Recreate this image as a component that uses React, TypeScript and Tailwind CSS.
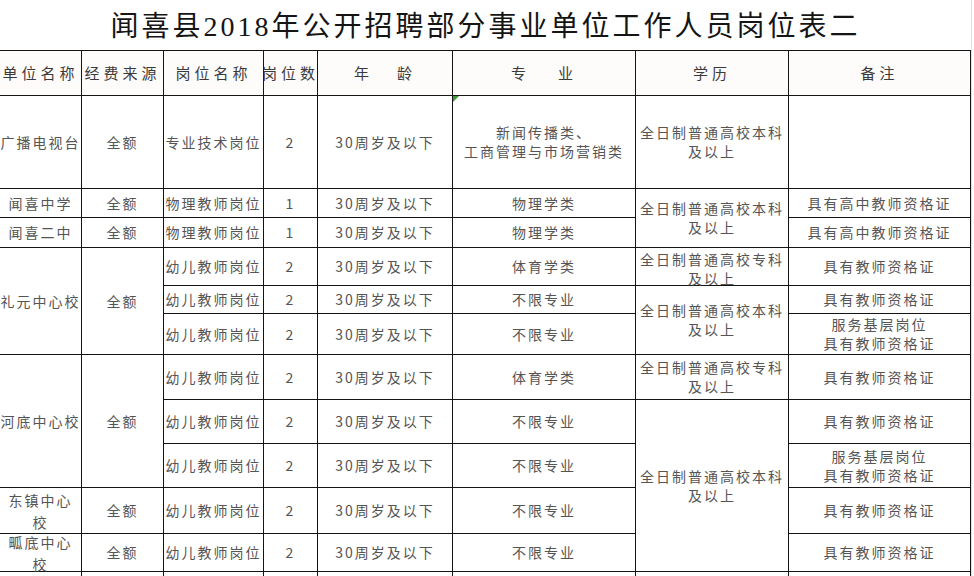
import React from "react";

const body = "font-['Noto_Sans_CJK_SC',sans-serif]";

// one grid cell, borders on the right and bottom like an Excel sheet
function Cell({
  children,
  className = "",
}: {
  children?: React.ReactNode;
  className?: string;
}) {
  return (
    <div
      className={
        "flex items-center justify-center text-center whitespace-nowrap border-r border-b border-[#141414] text-[14px] leading-[19px] tracking-[2px] text-[#555] " +
        className
      }
    >
      {children}
    </div>
  );
}

function Head({
  children,
  className = "",
}: {
  children?: React.ReactNode;
  className?: string;
}) {
  return (
    <div
      className={
        "flex items-center justify-center whitespace-nowrap border-r border-b border-[#141414] bg-[#fefbfb] text-[15px] tracking-[4px] text-[#3a3a3a] " +
        className
      }
    >
      {children}
    </div>
  );
}

const age = "30周岁及以下";

export default function App() {
  return (
    <div className={"w-[974px] h-[576px] overflow-hidden bg-white " + body}>
      <div className="w-[972px] border-r border-[#e2e2e2]">
        {/* 标题 */}
        <div className="h-[50px] w-[971px] flex items-center justify-center pt-[4px]">
          <h1 className="font-['Liberation_Serif','Noto_Sans_CJK_SC',serif] text-[28px] leading-none tracking-[3px] text-[#151515]">
            闻喜县2018年公开招聘部分事业单位工作人员岗位表二
          </h1>
        </div>

        {/* 岗位表 */}
        <div className="grid w-[971px] border-t border-[#141414] grid-cols-[82px_82px_100px_54px_135px_183px_153px_182px] grid-rows-[45px_93px_29px_30px_38px_28px_41px_45px_44px_44px_46px_38px_40px]">
          <Head>单位名称</Head>
          <Head>经费来源</Head>
          <Head>岗位名称</Head>
          <Head className="tracking-[2px]">岗位数</Head>
          <Head className="gap-6">
            <span>年</span>
            <span>龄</span>
          </Head>
          <Head className="gap-7">
            <span>专</span>
            <span>业</span>
          </Head>
          <Head>学历</Head>
          <Head>备注</Head>

          {/* 广播电视台 */}
          <Cell>广播电视台</Cell>
          <Cell>全额</Cell>
          <Cell>专业技术岗位</Cell>
          <Cell>2</Cell>
          <Cell>{age}</Cell>
          <Cell className="relative">
            <span className="absolute left-0 top-0 h-0 w-0 border-t-[6px] border-r-[6px] border-t-[#3f9a3a] border-r-transparent" />
            新闻传播类、
            <br />
            工商管理与市场营销类
          </Cell>
          <Cell>
            全日制普通高校本科
            <br />
            及以上
          </Cell>
          <Cell />

          {/* 闻喜中学 / 闻喜二中 */}
          <Cell>闻喜中学</Cell>
          <Cell>全额</Cell>
          <Cell>物理教师岗位</Cell>
          <Cell>1</Cell>
          <Cell>{age}</Cell>
          <Cell>物理学类</Cell>
          <Cell className="row-span-2">
            全日制普通高校本科
            <br />
            及以上
          </Cell>
          <Cell>具有高中教师资格证</Cell>

          <Cell>闻喜二中</Cell>
          <Cell>全额</Cell>
          <Cell>物理教师岗位</Cell>
          <Cell>1</Cell>
          <Cell>{age}</Cell>
          <Cell>物理学类</Cell>
          <Cell>具有高中教师资格证</Cell>

          {/* 礼元中心校 */}
          <Cell className="row-span-3">礼元中心校</Cell>
          <Cell className="row-span-3">全额</Cell>
          <Cell>幼儿教师岗位</Cell>
          <Cell>2</Cell>
          <Cell>{age}</Cell>
          <Cell>体育学类</Cell>
          <Cell className="pt-[4px]">
            全日制普通高校专科
            <br />
            及以上
          </Cell>
          <Cell>具有教师资格证</Cell>

          <Cell>幼儿教师岗位</Cell>
          <Cell>2</Cell>
          <Cell>{age}</Cell>
          <Cell>不限专业</Cell>
          <Cell className="row-span-2">
            全日制普通高校本科
            <br />
            及以上
          </Cell>
          <Cell>具有教师资格证</Cell>

          <Cell>幼儿教师岗位</Cell>
          <Cell>2</Cell>
          <Cell>{age}</Cell>
          <Cell>不限专业</Cell>
          <Cell>
            服务基层岗位
            <br />
            具有教师资格证
          </Cell>

          {/* 河底中心校 */}
          <Cell className="row-span-3">河底中心校</Cell>
          <Cell className="row-span-3">全额</Cell>
          <Cell>幼儿教师岗位</Cell>
          <Cell>2</Cell>
          <Cell>{age}</Cell>
          <Cell>体育学类</Cell>
          <Cell>
            全日制普通高校专科
            <br />
            及以上
          </Cell>
          <Cell>具有教师资格证</Cell>

          <Cell>幼儿教师岗位</Cell>
          <Cell>2</Cell>
          <Cell>{age}</Cell>
          <Cell>不限专业</Cell>
          <Cell className="row-span-4">
            全日制普通高校本科
            <br />
            及以上
          </Cell>
          <Cell>具有教师资格证</Cell>

          <Cell>幼儿教师岗位</Cell>
          <Cell>2</Cell>
          <Cell>{age}</Cell>
          <Cell>不限专业</Cell>
          <Cell>
            服务基层岗位
            <br />
            具有教师资格证
          </Cell>

          {/* 东镇中心校 */}
          <Cell className="leading-[22px]">
            东镇中心
            <br />
            校
          </Cell>
          <Cell>全额</Cell>
          <Cell>幼儿教师岗位</Cell>
          <Cell>2</Cell>
          <Cell>{age}</Cell>
          <Cell>不限专业</Cell>
          <Cell>具有教师资格证</Cell>

          {/* 畖底中心校 */}
          <Cell className="leading-[22px]">
            畖底中心
            <br />
            校
          </Cell>
          <Cell>全额</Cell>
          <Cell>幼儿教师岗位</Cell>
          <Cell>2</Cell>
          <Cell>{age}</Cell>
          <Cell>不限专业</Cell>
          <Cell>具有教师资格证</Cell>

          {/* 下一行，在画面外 */}
          <Cell />
          <Cell />
          <Cell />
          <Cell />
          <Cell />
          <Cell />
          <Cell />
          <Cell />
        </div>
      </div>
    </div>
  );
}
